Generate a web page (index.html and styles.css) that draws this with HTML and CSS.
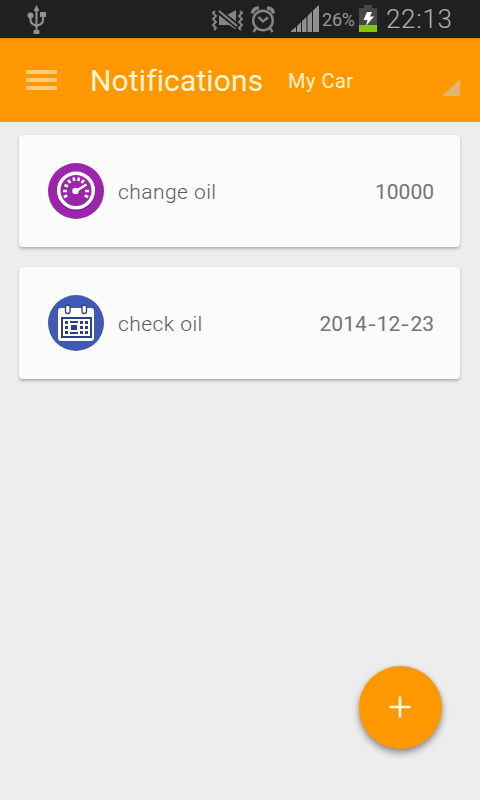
FILE: index.html
```html
<!DOCTYPE html>
<html lang="en">
<head>
<meta charset="utf-8">
<title>Notifications</title>
<link rel="stylesheet" href="styles.css">
</head>
<body>
<div class="screen">
  <div class="status">
    <svg class="usb" width="20" height="32" viewBox="0 0 20 32" fill="none" stroke="#929292" stroke-width="2">
      <path d="M9.500 5v23M3.500 12v4q0 3 3 4.500l3 1.500M16 11v5q0 3-3 4.500l-3.500 1.500"/>
      <g fill="#929292" stroke="none"><path d="M9.500 1l3 6h-6zM13 8h6v5h-6z"/><circle cx="3.500" cy="11.500" r="3"/><rect x="6.500" y="26" width="6" height="4" rx="1"/></g>
    </svg>
    <svg class="mute" width="33" height="24" viewBox="0 0 33 24" fill="none" stroke="#858585" stroke-width="2">
      <path d="M4 3L2 5l3 3-3 3 3 3-3 3 3 3-2 2M29 3l2 2-3 3 3 3-3 3 3 3-3 3 2 2"/>
      <path fill="#858585" stroke="none" d="M8 7l17 13.500v1L18 17H8zM16 7l9-5v13z"/>
      <path d="M8 3l18 14" stroke="#202020" stroke-width="4.500"/>
      <path d="M8 3l18 15" stroke-width="2.200"/>
    </svg>
    <svg class="alarm" width="26" height="28" viewBox="0 0 26 28" fill="none" stroke="#858585" stroke-width="2.400">
      <circle cx="13" cy="15.500" r="9.800"/>
      <path d="M8.500 12l4.500 4.500 5-4M6 23l-2.500 4M20 23l2.500 4"/>
      <path d="M2.500 8.500Q3 3 9 3M23.500 8.500Q23 3 17 3" stroke-width="3.400"/>
    </svg>
    <svg class="signal" width="28" height="28" viewBox="0 0 28 28" fill="#919191">
      <path d="M0 27v-1l5-4v5zM6 27v-6l4-4v10zM11 27V16l4.500-4v15zM16.500 27V11l4.500-4.500V27zM22 27V5.500L28 0v27z"/>
    </svg>
    <span class="percent">26%</span>
    <svg class="battery" width="18" height="28" viewBox="0 0 18 28">
      <path fill="#484848" d="M0 3h5V0h8v3h5v17H0z"/>
      <path fill="#85c60a" d="M0 20h18v7H0z"/>
      <path fill="#fff" d="M8 7h5l-2 4.500h4L7 21l1.500-6H4.500z"/>
    </svg>
    <span class="clock">22:13</span>
  </div>
  <header class="bar">
    <div class="menu"><i></i><i></i><i></i></div>
    <h1 class="title">Notifications</h1>
    <span class="car">My Car</span>
    <svg class="spinner" width="18" height="18" viewBox="0 0 18 18"><path fill="#e4b36c" d="M18 0v17H0z"/></svg>
  </header>
  <main class="list">
    <article class="card">
      <svg class="icon" width="56" height="56" viewBox="0 0 56 56">
        <circle cx="28" cy="28" r="28" fill="#9b26ab"/>
        <circle cx="28" cy="28.500" r="17.500" fill="none" stroke="#76188a" stroke-width="4"/>
        <circle cx="28" cy="27.500" r="17.300" fill="#9b26ab" stroke="#fff" stroke-width="3.600"/>
        <path d="M15 28h4M41 28h-4M15.800 34l3.500-1.500M40.200 34l-3.500-1.500M16.500 22l3.500 1.500M20 17l2.500 3M25.500 14.500l.8 3.500M31 14.500l-.8 3.500M36 17l-2.500 3" stroke="#fff" stroke-width="2.600"/>
        <path d="M28 28l10.500-6.500" stroke="#fff" stroke-width="2.600"/>
        <circle cx="27.500" cy="28" r="3.200" fill="#fff"/>
      </svg>
      <span class="name">change oil</span><span class="value">10000</span>
    </article>
    <article class="card">
      <svg class="icon" width="56" height="56" viewBox="0 0 56 56">
        <circle cx="28" cy="28" r="28" fill="#405ab2"/>
        <rect x="10" y="13" width="36" height="33" rx="3" fill="#fff"/>
        <g fill="#fff" stroke="#2c3f86" stroke-width="1.300"><rect x="17.500" y="10" width="4.500" height="8.500" rx="2.200"/><rect x="34" y="10" width="4.500" height="8.500" rx="2.200"/></g>
        <rect x="14" y="23" width="29" height="19" fill="#fff" stroke="#2c3f86" stroke-width="2"/>
        <path fill="#2c3f86" d="M17 26h3v3h-3zM22 26h8v2h-8zM32 26h3v3h-3zM37 26h3v3h-3zM17 31h3v3h-3zM23 30h6v5h-6zM32 31h3v3h-3zM37 31h3v3h-3zM17 36h3v3h-3zM22 37h8v2h-8zM32 36h3v3h-3zM37 36h3v3h-3z"/>
      </svg>
      <span class="name">check oil</span><span class="value">2014<span class="dash">-</span>12<span class="dash">-</span>23</span>
    </article>
  </main>
  <button class="add" aria-label="Add"><svg width="22" height="22" viewBox="0 0 22 22"><path d="M11 .5v21M.5 11h21" stroke="#fffbe8" stroke-width="2.600"/></svg></button>
</div>
</body>
</html>
```
FILE: styles.css
```css
* { box-sizing: border-box; }
body { margin: 0; font-family: Roboto, "Liberation Sans", sans-serif; background: #ededed; }
.screen { position: relative; width: 480px; height: 800px; overflow: hidden; background: #ededed; }
svg { display: block; flex: none; }

.status { display: flex; height: 38px; padding: 4px 0 0 27px; background: #202020; border-bottom: 1px solid #291505; }
.mute { margin: 4px 0 0 164px; }
.alarm { margin: 1px 0 0 6px; }
.signal { margin: 1px 0 0 15px; }
.percent { width: 37px; margin-left: 3px; font-size: 18px; line-height: 32px; letter-spacing: -.2px; color: #989898; white-space: nowrap; }
.battery { margin-top: 1px; }
.clock { margin-left: 9px; font-size: 26px; line-height: 31px; font-weight: 300; letter-spacing: .7px; color: #b0b0b0; }

.bar { display: flex; align-items: center; height: 84px; padding: 0 20px 0 26px; background: linear-gradient(#ed8d02, #ff9800 3px); }
.menu { display: flex; flex-direction: column; gap: 4px; width: 31px; }
.menu i { height: 4px; background: #ffcb78; }
.title { width: 198px; margin: 0 0 0 33px; font-size: 30px; font-weight: 400; letter-spacing: .13px; color: #fff6d5; white-space: nowrap; }
.car { padding-top: 2px; font-size: 20px; letter-spacing: .5px; color: #fff3ce; }
.spinner { margin: 15px 0 0 auto; }

.list { display: flex; flex-direction: column; gap: 20px; padding: 13px 20px 0 19px; }
.card { display: flex; align-items: center; height: 112px; padding: 0 26px 0 29px; background: #fbfbfb; border-radius: 4px; box-shadow: 0 2px 3px rgba(0, 0, 0, .24), 0 0 2px rgba(0, 0, 0, .06); font-size: 21px; color: #747474; }
.name { margin-left: 14px; padding-top: 2px; font-weight: 300; letter-spacing: .45px; color: #5c5c5c; }
.value { margin-left: auto; padding-top: 2px; }
.dash { display: inline-block; width: 10px; text-align: center; transform: scaleX(1.3); }

.add { position: absolute; left: 359px; top: 666px; display: grid; place-items: center; width: 83px; height: 83px; padding: 0 2px 1px 0; border: 0; border-radius: 50%; background: #ff9800; box-shadow: 0 4px 7px rgba(0, 0, 0, .4), 0 0 3px rgba(0, 0, 0, .1); }
```
